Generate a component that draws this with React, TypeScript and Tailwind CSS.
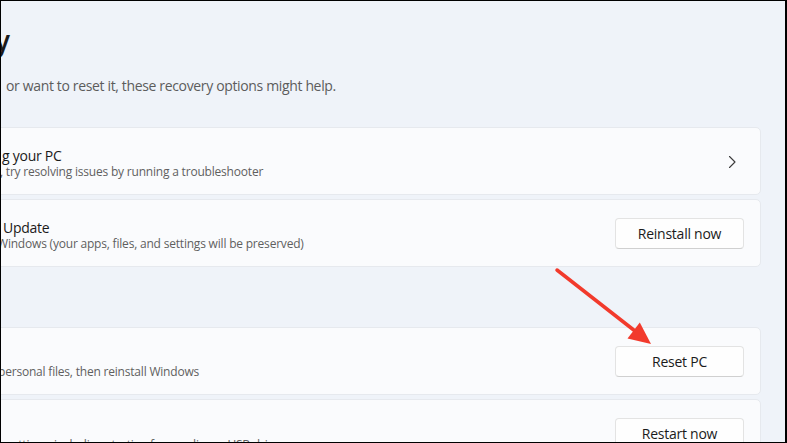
import React from "react";

function Card({
  children,
  right,
}: {
  children: React.ReactNode;
  right?: React.ReactNode;
}) {
  return (
    <div className="-ml-[30px] h-[68px] shrink-0 flex items-center rounded-[5px] border border-[#e6e9ee] bg-[#fafbfd] pl-[29px] pr-[16px]">
      <div className="flex-1 min-w-0 flex flex-col whitespace-nowrap pt-[3px]">{children}</div>
      {right}
    </div>
  );
}

function Btn({ label }: { label: string }) {
  return (
    <button className="mt-[1px] h-[31px] w-[129px] rounded-[4px] border border-[#e3e3e3] border-b-[#d0d0d0] bg-[#fefefe] text-[14px] tracking-[-0.25px] text-[#1b1b1b] flex items-center justify-center">
      {label}
    </button>
  );
}

function Title({ children }: { children: React.ReactNode }) {
  return <div className="text-[14px] leading-[18px] tracking-[-0.25px] text-[#1a1a1a]">{children}</div>;
}

function Sub({ children, low }: { children: React.ReactNode; low?: boolean }) {
  return (
    <div
      className={
        low
          ? "mt-[3px] text-[12px] leading-[12px] tracking-[-0.2px] text-[#5f5f5f]"
          : "mt-[1px] text-[12px] leading-[12px] tracking-[-0.2px] text-[#5f5f5f]"
      }
    >
      {children}
    </div>
  );
}

export default function App() {
  return (
    <div
      className="relative w-[787px] h-[443px] overflow-hidden border-t border-l border-b border-r-2 border-black bg-[#eff3f9]"
      style={{ fontFamily: '"Segoe UI", "Open Sans", "Noto Sans", sans-serif' }}
    >
      <div className="flex flex-col pr-[24px]">
        <div className="pt-[21px] h-[55px] text-[28px] leading-[36px] font-semibold text-[#1a1a1a] whitespace-nowrap">
          <span className="inline-block -ml-[6px]">y</span>
        </div>
        <div className="mt-[20px] text-[14px] leading-[20px] tracking-[-0.35px] text-[#5c5c5c] whitespace-nowrap">
          <span className="inline-block ml-[5px]">or want to reset it, these recovery options might help.</span>
        </div>

        <div className="mt-[31px] flex flex-col gap-[4px]">
          <Card
            right={
              <svg width="16" height="16" viewBox="0 0 16 16" className="mr-[4px] mt-[1px]">
                <polyline
                  points="5.5,2.5 11,8 5.5,13.5"
                  fill="none"
                  stroke="#3a3a3a"
                  strokeWidth="1.1"
                  strokeLinecap="round"
                  strokeLinejoin="round"
                />
              </svg>
            }
          >
            <Title>
              <span className="inline-block ml-[1px]">g your PC</span>
            </Title>
            <Sub>
              <span className="inline-block -ml-[1px]">, try resolving issues by running a troubleshooter</span>
            </Sub>
          </Card>
          <Card right={<Btn label="Reinstall now" />}>
            <Title>
              <span className="inline-block ml-[2px]">Update</span>
            </Title>
            <Sub>
              <span className="inline-block -ml-[4px]">Windows (your apps, files, and settings will be preserved)</span>
            </Sub>
          </Card>
        </div>

        <div className="mt-[60px] flex flex-col gap-[4px]">
          <Card right={<Btn label="Reset PC" />}>
            <Title>&nbsp;</Title>
            <Sub>
              <span className="inline-block -ml-[3px]">personal files, then reinstall Windows</span>
            </Sub>
          </Card>
          <Card right={<Btn label="Restart now" />}>
            <Title>&nbsp;</Title>
            <Sub low>
              <span className="inline-block -ml-[12px]">up settings, including starting from a disc or USB drive</span>
            </Sub>
          </Card>
        </div>
      </div>

      <svg
        className="absolute left-0 top-0 pointer-events-none"
        width="787"
        height="443"
        viewBox="0 0 787 443"
      >
        <line x1="556" y1="269" x2="634" y2="330" stroke="#f23a2c" strokeWidth="3.5" strokeLinecap="round" />
        <polygon points="650,343 626.5,337.5 638.8,321.5" fill="#f23a2c" />
      </svg>
    </div>
  );
}
